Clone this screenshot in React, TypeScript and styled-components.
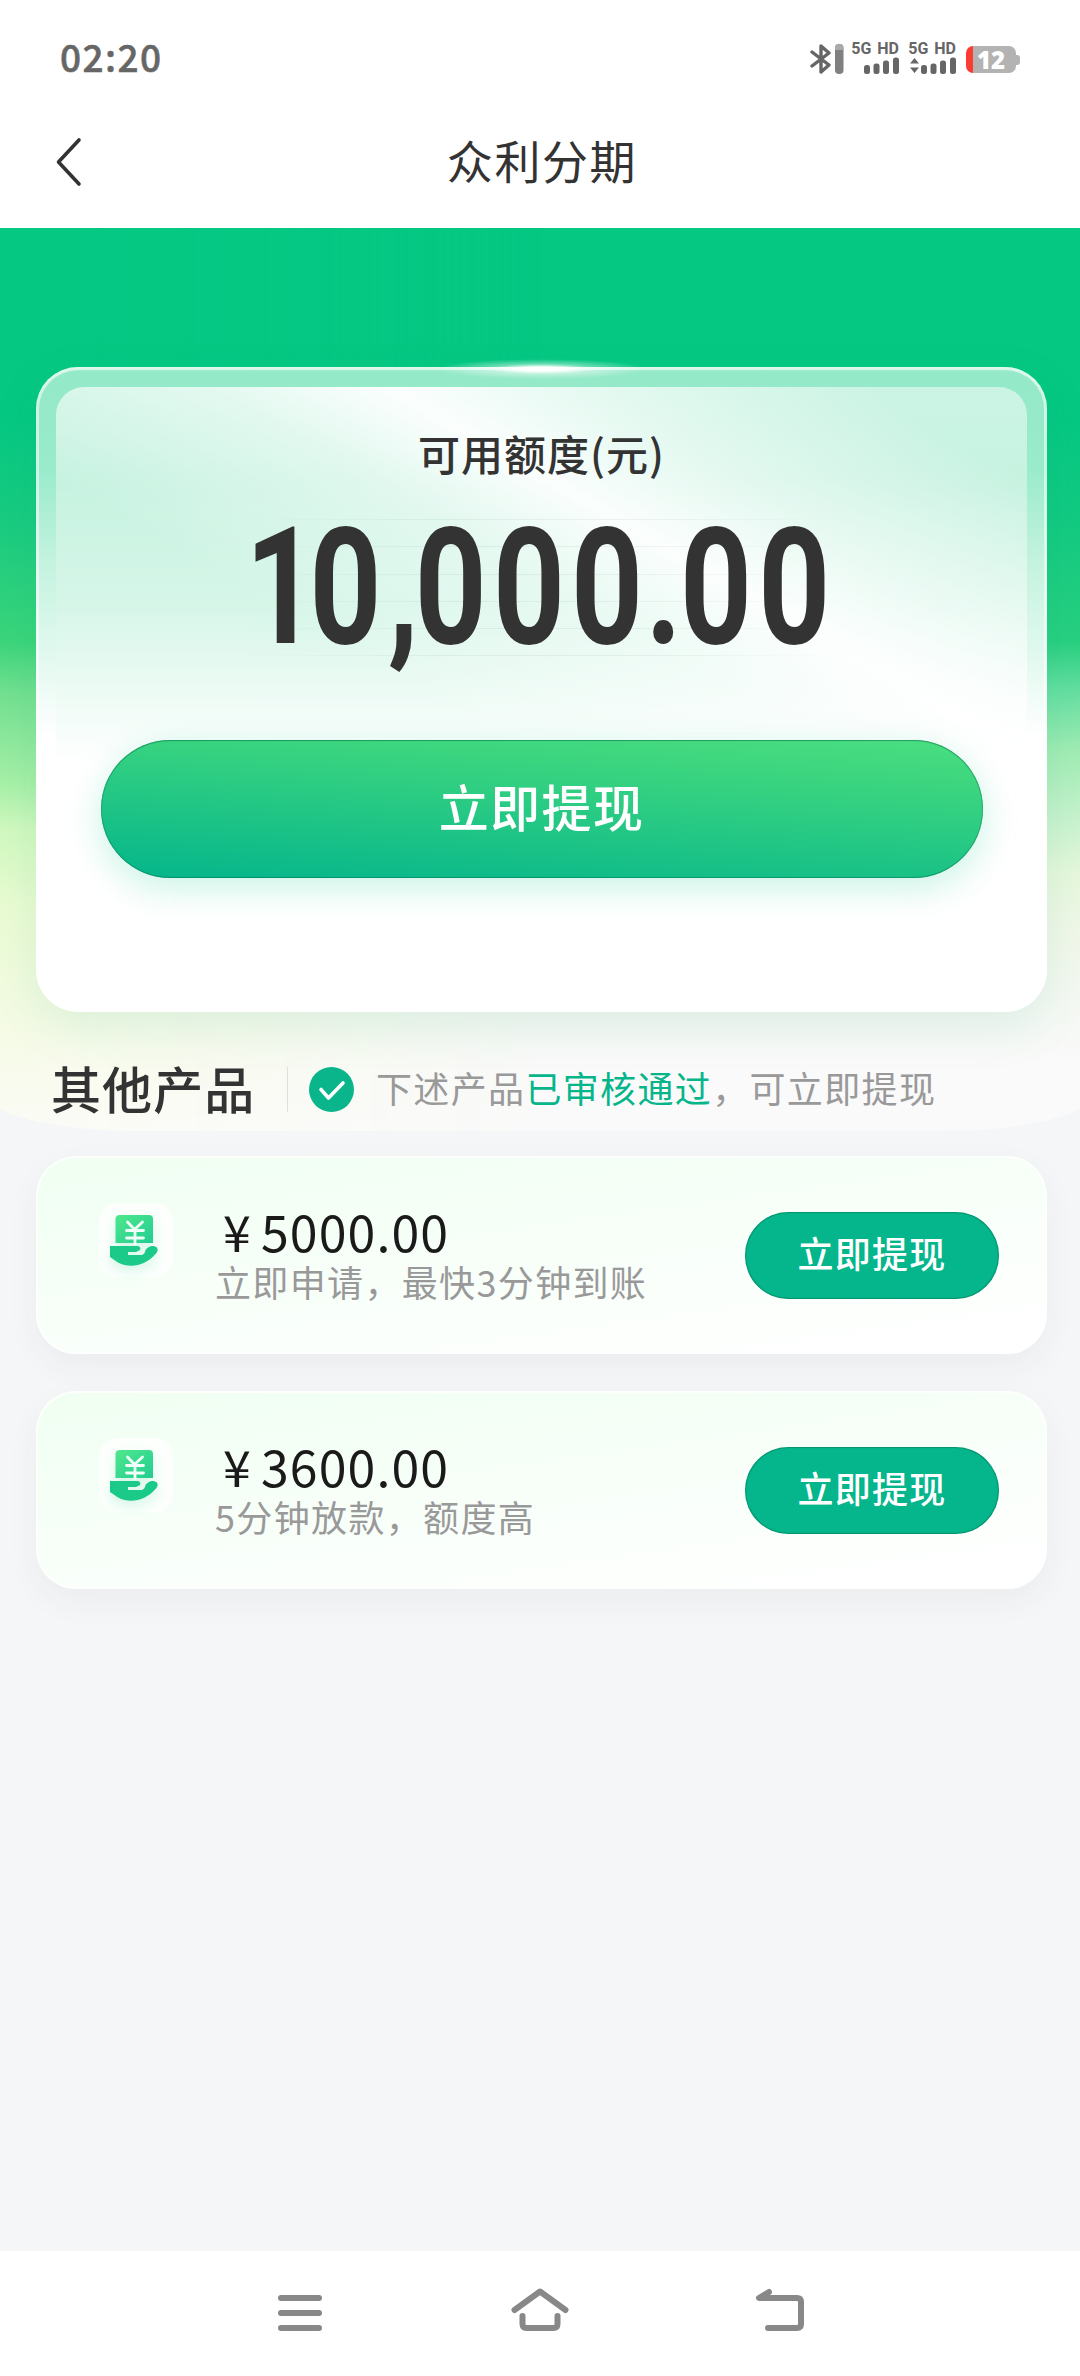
import React from "react";
import styled, { createGlobalStyle } from "styled-components";

const GlobalStyle = createGlobalStyle`
  * { box-sizing: border-box; }
  body { margin: 0; background: #f4f6f8; }
  button { font: inherit; border: 0; padding: 0; background: none; }
`;

const Screen = styled.div`
  width: 1080px;
  height: 2376px;
  display: flex;
  flex-direction: column;
  background: #f4f6f8;
  overflow: hidden;
  color: #333;
  font-family: "Noto Sans CJK SC", "Noto Sans", sans-serif;
`;

const StatusBar = styled.header`
  height: 92px;
  flex: none;
  display: flex;
  align-items: center;
  justify-content: space-between;
  padding: 23px 60px 0 60px;
  background: #fff;
`;

const Clock = styled.time`
  margin-top: -4px;
  font: 500 37px/40px "Noto Sans CJK SC", "Noto Sans", sans-serif;
  letter-spacing: 1.4px;
  color: #666;
  -webkit-text-stroke: 0.5px #666;
`;

const StatusIcons = styled.div`
  display: flex;
  align-items: flex-start;
  height: 36px;
`;

const Radio = styled.svg`
  display: block;
  width: 34px;
  height: 32px;
  margin: 3px 7px 0 0;
`;

const Signal = styled.div<{ $gap: number }>`
  width: 48px;
  margin-right: ${(p) => p.$gap}px;
  display: flex;
  flex-direction: column;
  align-items: flex-end;
  svg { display: block; }
`;

const Network = styled.span`
  font: 700 16px/17px Roboto, sans-serif;
  white-space: nowrap;
  word-spacing: 2px;
  color: #666;
`;

const Battery = styled.div`
  width: 50px;
  height: 27px;
  margin: 6px 4px 0 0;
  border-radius: 7px;
  background: linear-gradient(90deg, #fa3c32 7px, #b3b3b3 7px);
  position: relative;
  font: 800 24px/27px "Open Sans", sans-serif;
  color: #fff;
  text-align: center;
  &::after {
    content: "";
    position: absolute;
    left: 50px;
    top: 9px;
    width: 4px;
    height: 10px;
    border-radius: 0 3px 3px 0;
    background: #b3b3b3;
  }
`;

const TitleBar = styled.div`
  height: 136px;
  flex: none;
  display: grid;
  grid-template-columns: 100px 1fr 100px;
  align-items: center;
  background: #fff;
`;

const BackIcon = styled.svg`
  display: block;
  width: 30px;
  height: 50px;
  margin: 3px 0 0 55px;
`;

const Title = styled.h1`
  margin: 0 0 3px 4px;
  text-align: center;
  font-size: 46px;
  line-height: 60px;
  font-weight: 400;
  letter-spacing: 1.6px;
`;

const Hero = styled.section`
  height: 903px;
  flex: none;
  padding: 139px 33px 0 36px;
  position: relative;
  isolation: isolate;
  overflow: hidden;
  &::before, &::after {
    content: "";
    position: absolute;
    z-index: -1;
    top: 0;
    bottom: 0;
    left: -16px;
    right: -16px;
    border-radius: 0 0 150px 150px / 0 0 40px 40px;
  }
  &::before {
    background: linear-gradient(180deg, #05c883 0, #05c883 190px, #12ca82 290px, #28d080 413px,
      #62dea0 460px, #a0ecb4 522px, #ccf3d0 599px, #e6f7dc 645px, #f0f7e8 700px,
      #f4f8f2 770px, #fafafa 840px, #fafafa 100%);
  }
  &::after {
    background: linear-gradient(180deg, #05c883 0, #05c883 190px, #18cb80 290px, #3bd57b 413px,
      #72e090 465px, #a8f0a8 557px, #d0f8bf 600px, #e9fbd2 676px, #f1fbde 752px,
      #f7fbea 830px, #fbfbf6 100%);
    mask-image: linear-gradient(90deg, #000 0, #000 40px, transparent 560px);
  }
`;

const CreditCard = styled.div`
  position: relative;
  height: 645px;
  padding: 20px;
  border-radius: 42px;
  background: linear-gradient(180deg, #94e9c8 0, #98ebcb 100px, #c2f2de 190px, #e2f9ef 290px, #fff 370px);
  box-shadow: inset 0 0 0 3px rgba(255, 255, 255, 0.5), inset 0 3px 2px rgba(255, 255, 255, 0.4),
    0 16px 48px rgba(6, 150, 110, 0.1);
  &::before {
    content: "";
    position: absolute;
    left: 400px;
    right: 400px;
    top: -8px;
    height: 20px;
    background: radial-gradient(closest-side, #fff 20%, rgba(255, 255, 255, 0.4) 50%, transparent);
  }
`;

const CreditPanel = styled.div`
  height: 605px;
  border-radius: 28px;
  display: flex;
  flex-direction: column;
  align-items: center;
  background:
    linear-gradient(180deg, transparent 90px, rgba(255, 255, 255, 0.25) 220px, #fff 375px),
    linear-gradient(30deg, transparent 440px, rgba(255, 255, 255, 0.45) 600px, rgba(255, 255, 255, 0.93) 690px, rgba(255, 255, 255, 0.55) 775px, transparent 930px),
    linear-gradient(180deg, #ccf4e4, #c6f2e0 100px, #d0f5e3);
`;

const CreditLabel = styled.div`
  margin: 38px 0 2px;
  font-size: 42px;
  line-height: 56px;
  font-weight: 500;
  letter-spacing: 1px;
`;

const AmountArea = styled.div`
  width: 600px;
  height: 138px;
  margin-top: 36px;
  display: flex;
  justify-content: center;
  align-items: center;
  position: relative;
  isolation: isolate;
  &::before {
    content: "";
    position: absolute;
    z-index: -1;
    inset: 0;
    background: repeating-linear-gradient(180deg, rgba(40, 90, 70, 0.07) 0 1px, transparent 1px 27.3px);
    mask-image: linear-gradient(90deg, transparent, #000 35%, #000 65%, transparent);
  }
`;

const Amount = styled.div`
  flex: none;
  font: 700 163px/138px Roboto, sans-serif;
  letter-spacing: 8px;
  white-space: nowrap;
  transform: translateX(-1px) scaleX(0.77);
  color: #333;
`;

const Glyph = styled.span<{ $width?: number; $before?: number; $after: number }>`
  display: inline-block;
  width: ${(p) => (p.$width ? `${p.$width}px` : "auto")};
  margin-left: ${(p) => p.$before ?? 0}px;
  margin-right: ${(p) => p.$after}px;
  letter-spacing: 0;
`;

const PrimaryButton = styled.button`
  width: 882px;
  height: 138px;
  flex: none;
  margin-top: 83px;
  border-radius: 70px;
  background: linear-gradient(184deg, #4ade80 0%, #3dd67f 22%, #04b58b 100%);
  box-shadow: inset 0 0 0 1px rgba(0, 110, 70, 0.25), inset 0 1px 1px rgba(0, 110, 70, 0.4),
    inset 0 -1px 1px rgba(0, 110, 70, 0.3), 0 10px 36px rgba(6, 200, 140, 0.22);
  color: #fff;
  font-size: 50px;
  font-weight: 500;
  letter-spacing: 1.4px;
  line-height: 80px;
  padding-bottom: 8px;
`;

const SectionHeading = styled.div`
  height: 118px;
  padding: 36px 0 0 15px;
  display: flex;
  align-items: center;
`;

const SectionTitle = styled.h2`
  margin: -5px 0 0;
  width: 236px;
  white-space: nowrap;
  font-size: 50px;
  line-height: 60px;
  font-weight: 500;
  letter-spacing: 1.1px;
`;

const Divider = styled.span`
  width: 1px;
  height: 45px;
  margin-right: 21px;
  background: #dfe2dc;
`;

const CheckIcon = styled.svg`
  display: block;
  width: 45px;
  height: 45px;
  margin-right: 22px;
`;

const Note = styled.p`
  margin: -5px 0 0;
  font-size: 36px;
  line-height: 50px;
  letter-spacing: 1.35px;
  white-space: nowrap;
  color: #999;
`;

const Approved = styled.span`
  color: #07b58b;
`;

const ProductList = styled.main`
  flex: 1;
  padding: 25px 33px 0 36px;
  display: flex;
  flex-direction: column;
  gap: 37px;
`;

const ProductCard = styled.article`
  height: 198px;
  border-radius: 40px;
  padding: 0 48px 0 63px;
  display: flex;
  align-items: flex-start;
  background: linear-gradient(172deg, #f0fff2 0%, #f7fff8 45%, #fff 95%);
  box-shadow: inset 0 0 0 2px rgba(255, 255, 255, 0.75), 0 12px 32px rgba(60, 60, 60, 0.05);
`;

const ProductIcon = styled.div`
  width: 74px;
  height: 74px;
  margin-top: 47px;
  border-radius: 18px;
  background: rgba(255, 255, 255, 0.7);
  svg {
    display: block;
    margin: 12px 0 0 9px;
    filter: drop-shadow(0 6px 6px rgba(20, 200, 130, 0.16));
  }
`;

const ProductInfo = styled.div`
  flex: 1;
  margin-left: 42px;
  padding-top: 46px;
  white-space: nowrap;
`;

const Price = styled.div`
  display: flex;
  height: 56px;
  padding-left: 8px;
  font-size: 50px;
  line-height: 56px;
  letter-spacing: 1.1px;
  color: #1a1a1a;
`;

const Currency = styled.span`
  width: 38px;
`;

const Description = styled.div`
  font-size: 36px;
  line-height: 46px;
  letter-spacing: 1.35px;
  color: #999;
`;

const ApplyButton = styled.button`
  width: 254px;
  height: 87px;
  margin-top: 56px;
  border-radius: 44px;
  background: #05b58b;
  box-shadow: inset 0 0 0 1px rgba(0, 110, 80, 0.2), inset 0 0 1px 1px rgba(0, 90, 60, 0.25);
  color: #fff;
  font-size: 36px;
  line-height: 60px;
  padding-bottom: 7px;
  font-weight: 500;
  letter-spacing: 1.3px;
`;

const NavBar = styled.nav`
  height: 125px;
  flex: none;
  display: flex;
  justify-content: center;
  gap: 180px;
  padding-top: 32px;
  background: #fff;
  svg { display: block; fill: none; stroke: #888; stroke-width: 6; stroke-linecap: round; stroke-linejoin: round; }
`;

function SignalBars({ arrows }: { arrows?: boolean }) {
  return (
    <svg width="48" height="17" fill="#666">
      {arrows && <path d="M2 6.5 6.5 1 11 6.500ZM2 10.500 6.500 16 11 10.500Z" />}
      <rect x="13" y="8" width="6" height="9" rx="2.5" />
      <rect x="22.5" y="6.5" width="6" height="10.5" rx="2.5" />
      <rect x="32" y="3.5" width="6" height="13.5" rx="2.5" />
      <rect x="42" y="0.5" width="6" height="16.5" rx="2.5" />
    </svg>
  );
}

function MoneyHandIcon({ id }: { id: string }) {
  return (
    <svg width="56" height="56" viewBox="0 0 56 56">
      <defs>
        <linearGradient id={id} x1="0" y1="0" x2="1" y2="1">
          <stop offset="0" stopColor="#4fe78c" />
          <stop offset="1" stopColor="#22cd92" />
        </linearGradient>
      </defs>
      <path d="M11 0h30a4 4 0 0 1 4 4v24H7.500V4a4 4 0 0 1 3.500-4Z" fill={`url(#${id})`} />
      <path d="M2 31h27c4 0 4 3.500 2 4.500l-3 1.500h-8v3h13c3 0 4-2.500 4.500-5 2-3 6-5 9.500-3.500 4 1.500 3 5 0 8C38 50 23 54 10 47.500L2 42Z" fill="#1bc988" />
      <path d="M19.500 7l7 7.500 8-7.500M18.500 15.500h17M18.500 23h17M27 15v14" fill="none" stroke="#f0fff8" strokeWidth="2.800" strokeLinecap="round" />
    </svg>
  );
}

const products = [
  { price: "5000.00", note: "立即申请，最快3分钟到账" },
  { price: "3600.00", note: "5分钟放款，额度高" },
];

export default function App() {
  return (
    <Screen>
      <GlobalStyle />
      <StatusBar>
        <Clock>02:20</Clock>
        <StatusIcons>
          <Radio viewBox="0 0 34 32">
            <path d="M2 9 19 22 11 29V3l8 7L2 23" fill="none" stroke="#666" strokeWidth="3.400" strokeLinejoin="round" strokeLinecap="round" />
            <rect x="25" y="1" width="8.500" height="30" rx="4" fill="#808080" />
            <path d="M25 7V5a4.200 4.200 0 0 1 8.500 0v2Z" fill="#aaa" />
          </Radio>
          <Signal $gap={9}>
            <Network>5G HD</Network>
            <SignalBars />
          </Signal>
          <Signal $gap={10}>
            <Network>5G HD</Network>
            <SignalBars arrows />
          </Signal>
          <Battery>12</Battery>
        </StatusIcons>
      </StatusBar>
      <TitleBar>
        <BackIcon viewBox="0 0 30 50" aria-label="返回">
          <path d="M24 3 3.500 25 24 47" fill="none" stroke="#333" strokeWidth="3.600" strokeLinecap="round" strokeLinejoin="round" />
        </BackIcon>
        <Title>众利分期</Title>
      </TitleBar>
      <Hero>
        <CreditCard>
          <CreditPanel>
            <CreditLabel>可用额度(元)</CreditLabel>
            <AmountArea>
              <Amount>
                <Glyph $after={-10}>1</Glyph>0<Glyph $width={27} $after={8}>,</Glyph>000
                <Glyph $width={31} $before={-5} $after={14}>.</Glyph>00
              </Amount>
            </AmountArea>
            <PrimaryButton>立即提现</PrimaryButton>
          </CreditPanel>
        </CreditCard>
        <SectionHeading>
          <SectionTitle>其他产品</SectionTitle>
          <Divider />
          <CheckIcon viewBox="0 0 45 45">
            <circle cx="22.500" cy="22.500" r="22.500" fill="#0ab58b" />
            <path d="M12 22.500 19.500 31 34 16" fill="none" stroke="#fff" strokeWidth="3.600" strokeLinecap="round" strokeLinejoin="round" />
          </CheckIcon>
          <Note>
            下述产品<Approved>已审核通过</Approved>，可立即提现
          </Note>
        </SectionHeading>
      </Hero>
      <ProductList>
        {products.map((p) => (
          <ProductCard key={p.price}>
            <ProductIcon>
              <MoneyHandIcon id={`note-${p.price}`} />
            </ProductIcon>
            <ProductInfo>
              <Price>
                <Currency>¥</Currency>
                {p.price}
              </Price>
              <Description>{p.note}</Description>
            </ProductInfo>
            <ApplyButton>立即提现</ApplyButton>
          </ProductCard>
        ))}
      </ProductList>
      <NavBar>
        <svg width="60" height="60" viewBox="270 2283 60 60">
          <path d="M281 2298h38M281 2313h38M281 2328h38" />
        </svg>
        <svg width="60" height="60" viewBox="510 2283 60 60">
          <path d="M514.500 2310 540 2291.500 565.500 2310M522.500 2316v8q0 4 4 4h27q4 0 4-4v-8" />
        </svg>
        <svg width="60" height="60" viewBox="750 2283 60 60">
          <path d="M769 2292 759 2298h38q4 0 4 4v22q0 4-4 4H768" />
        </svg>
      </NavBar>
    </Screen>
  );
}
